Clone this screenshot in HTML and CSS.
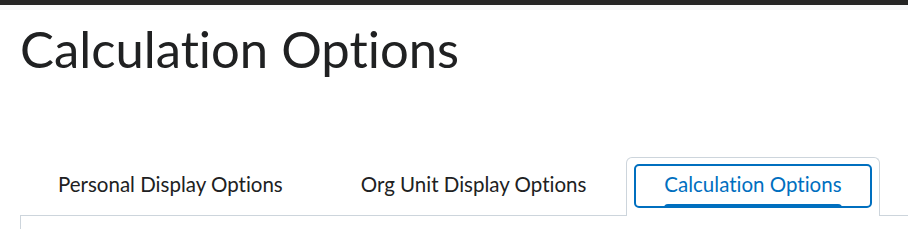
FILE: index.html
```html
<!DOCTYPE html>
<html lang="en">
<head>
<meta charset="utf-8">
<title>Calculation Options</title>
<link rel="stylesheet" href="styles.css">
</head>
<body>
<div class="topbar"></div>
<main class="page">
  <h1 class="title">Calculation Options</h1>
  <div class="tabs" role="tablist">
    <div class="tab" role="tab"><span class="ring"><span class="label">Personal Display Options</span></span></div>
    <div class="tab" role="tab"><span class="ring"><span class="label">Org Unit Display Options</span></span></div>
    <div class="tab tab-active" role="tab" aria-selected="true"><span class="ring ring-focus"><span class="label">Calculation Options</span><span class="indicator"></span></span></div>
  </div>
  <div class="panel"></div>
</main>
</body>
</html>
```
FILE: styles.css
```css
* { box-sizing: border-box; }
html, body { margin: 0; padding: 0; background: #fff; }
body {
  font-family: Lato, "Noto Sans", sans-serif;
  color: #202122;
  overflow: hidden;
  font-variant-ligatures: none;
  font-feature-settings: "liga" 0, "clig" 0;
}

.topbar {
  height: 10px;
  background: #f6f7f8;
  border-top: 5px solid #232323;
}

.page { padding-left: 20px; }

.title {
  margin: 9px 0 0 0;
  font-size: 50.8px;
  font-weight: 400;
  line-height: 60px;
  color: #202122;
}

.tabs {
  display: flex;
  gap: 2px;
  margin-top: 78px;
  margin-left: 0;
  height: 58px;
  position: relative;
  z-index: 1;
}

.tab {
  display: flex;
  height: 59px;
  padding: 6px 7px 8px 7px;
  border: 1px solid transparent;
  border-bottom: none;
  border-radius: 6px 6px 0 0;
  background: transparent;
  font-size: 20.5px;
  line-height: 24px;
  color: #202122;
}

.tab-active {
  border-color: #cdd5dc;
  background: #fff;
  color: #006fbf;
}

.ring {
  position: relative;
  display: flex;
  align-items: center;
  padding: 0 28px 5px 28px;
  border: 2px solid transparent;
  border-radius: 5px;
}

.ring-focus { border-color: #006fbf; }

.label { white-space: nowrap; }

.indicator {
  position: absolute;
  left: 28px;
  right: 28px;
  bottom: -2px;
  height: 4px;
  background: #006fbf;
  border-radius: 4px 4px 0 0;
}

.panel {
  height: 14px;
  border-top: 1px solid #cdd5dc;
  border-left: 1px solid #cdd5dc;
}
```
